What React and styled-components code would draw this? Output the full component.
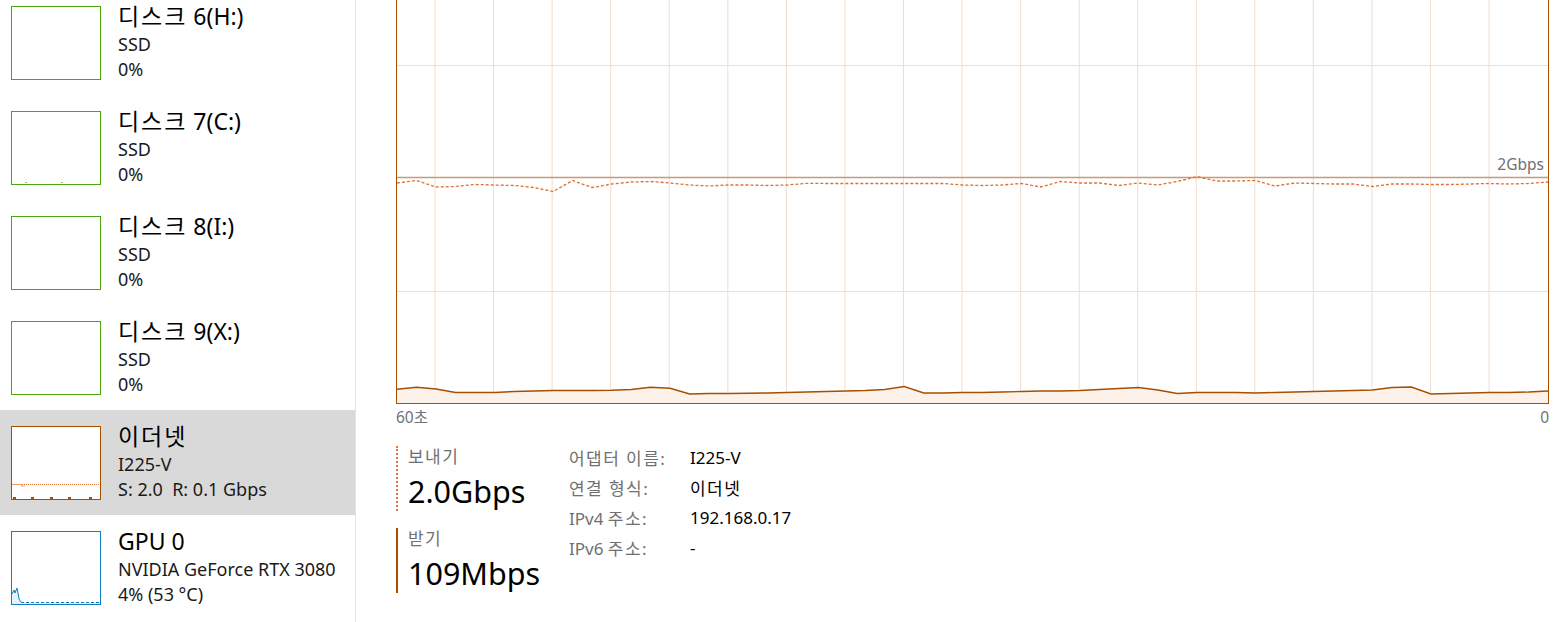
import React from "react";
import styled, { createGlobalStyle } from "styled-components";

const FONT = `"Segoe UI", "Noto Sans", "Noto Sans CJK KR", sans-serif`;
const ETH = "#a74f01";

const Global = createGlobalStyle`
  html, body { margin: 0; padding: 0; background: #fff; overflow: hidden; }
  body { font-family: ${FONT}; color: #000; }
  #root { width: 1560px; height: 622px; overflow: hidden; }
`;

/* Hangul runs are set slightly wider, as the original's Korean face is. */
const Ko = styled.span`
  letter-spacing: 0.085em;
`;

function T({ children }) {
  const parts = String(children).split(/([\uAC00-\uD7A3]+(?:\s[\uAC00-\uD7A3]+)*)/);
  return parts.map((p, i) =>
    /[\uAC00-\uD7A3]/.test(p) ? <Ko key={i}>{p}</Ko> : <React.Fragment key={i}>{p}</React.Fragment>
  );
}

const Page = styled.div`
  display: flex;
  width: 1560px;
  height: 622px;
  overflow: hidden;
`;

const Sidebar = styled.div`
  width: 355px;
  flex: none;
  border-right: 1px solid #e5e5e5;
  display: flex;
  flex-direction: column;
  margin-top: -10px;
`;

const Item = styled.div`
  display: flex;
  height: 105px;
  flex: none;
  padding-left: 11px;
  gap: 17px;
  background: ${(p) => (p.$selected ? "#d9d9d9" : "transparent")};
`;

const Thumb = styled.div`
  width: 90px;
  height: 74px;
  box-sizing: border-box;
  margin-top: 16px;
  border: 1px solid ${(p) => p.$color};
  background: #fff;
  flex: none;
  svg { display: block; }
`;

const ItemText = styled.div`
  padding-top: 10px;
  display: flex;
  flex-direction: column;
`;

const ItemTitle = styled.div`
  font-size: 23px;
  line-height: 32px;
  color: #000;
  white-space: nowrap;
`;

const ItemSub = styled.div`
  font-size: 18px;
  line-height: 25px;
  color: #1a1a1a;
  white-space: nowrap;
`;

const Main = styled.div`
  flex: 1;
  padding-left: 40px;
  padding-right: 11px;
  display: flex;
  flex-direction: column;
`;

const ChartBox = styled.div`
  position: relative;
  margin-top: -48px;
  width: 1153px;
  height: 452px;
  box-sizing: border-box;
  border: 1px solid ${ETH};
  border-left-width: 1.5px;
  svg { display: block; }
`;

const ScaleLabel = styled.span`
  position: absolute;
  right: 4px;
  top: 201px;
  font-size: 15.5px;
  line-height: 20px;
  color: #707070;
`;

const AxisRow = styled.div`
  display: flex;
  justify-content: space-between;
  width: 1153px;
  margin-top: 3px;
  font-size: 15.5px;
  line-height: 20px;
  color: #6f7278;
`;

const Stats = styled.div`
  display: flex;
  margin-top: 15px;
`;

const Blocks = styled.div`
  width: 173px;
  flex: none;
  display: flex;
  flex-direction: column;
  gap: 17px;
  padding-top: 4px;
`;

const Block = styled.div`
  border-left: 2px ${(p) => (p.$dashed ? "dotted #e0763a" : `solid ${ETH}`)};
  padding-left: 10px;
  display: flex;
  flex-direction: column;
`;

const BlockLabel = styled.div`
  font-size: 17px;
  line-height: 22px;
  color: #707070;
`;

const BlockValue = styled.div`
  font-size: 30.5px;
  line-height: 40px;
  margin-top: 3px;
  color: #000;
  white-space: nowrap;
`;

const Props = styled.div`
  display: grid;
  grid-template-columns: 121px auto;
  grid-auto-rows: 30px;
  align-items: center;
  font-size: 17px;
`;

const PropLabel = styled.div`
  color: #707070;
  white-space: nowrap;
`;

const PropValue = styled.div`
  color: #000;
  white-space: nowrap;
`;

const sendY = [183,180.5,187,186.5,184.5,185,185.5,187.5,191.5,180.5,187.5,184,182,181.5,183,185,186,185,185,185.5,185,183.3,183.5,183.5,183.5,183.5,183.5,183.5,183.5,185,185.5,185,183.5,187,181.5,183,183,185.5,183,185,181.5,176.5,181,181,180.5,186,183,183.5,184,184,186.5,184,184,184.5,184.5,184,183.5,184,183.5,182];
const recvY = [389.3,387.3,389,392.5,392.5,392.5,391.5,391,390.5,390.5,390.5,390.3,389.5,387.3,388.3,394,393.5,393.5,393.2,393,392.5,392,391.5,391,390.5,389.5,386.5,393,393,392.5,392.5,392,391.5,391,391,390.5,389.5,388.5,387.5,390,393.5,392.5,392.5,392.5,393,392.5,392,391.5,391,390.5,390,387.5,387,394,393.5,393,392.5,392.5,392,391];

const X0 = 397;
const W = 1151;
const px = (i) => X0 + (i * W) / 59;
const pts = (arr) => arr.map((y, i) => `${px(i).toFixed(1)},${y}`).join(" ");

function MainChart() {
  const vlines = [];
  for (let k = 0; k <= 18; k++) vlines.push(435 + k * 58.56);
  const fill = `${pts(recvY)} ${X0 + W},403 ${X0},403`;
  return (
    <svg width={W} height={450} viewBox={`${X0} -47 ${W} 450`}>
      {vlines.map((x) => (
        <line key={x} x1={x} x2={x} y1={-47} y2={403} stroke="#f0ddcd" strokeWidth="1" />
      ))}
      <line x1={X0} x2={X0 + W} y1={65.5} y2={65.5} stroke="#f0ddcd" strokeWidth="1" />
      <line x1={X0} x2={X0 + W} y1={291.5} y2={291.5} stroke="#f0ddcd" strokeWidth="1" />
      <polygon points={fill} fill="#fcf2e9" />
      <line x1={X0} x2={X0 + W} y1={177.5} y2={177.5} stroke="#c79b78" strokeWidth="1.4" />
      <polyline points={pts(sendY)} fill="none" stroke="#e0702f" strokeWidth="1.3" strokeDasharray="3 2" />
      <polyline points={pts(recvY)} fill="none" stroke={ETH} strokeWidth="1.4" />
    </svg>
  );
}

function DiskThumb({ specks }) {
  return (
    <svg width="88" height="72">
      {specks &&
        [13, 49].map((x) => <rect key={x} x={x} y={70} width="2" height="1" fill="#8cc866" />)}
    </svg>
  );
}

function EthThumb() {
  return (
    <svg width="88" height="72">
      <line x1="0" x2="10" y1="57.5" y2="57.5" stroke="#e8a27a" strokeWidth="1.2" />
      <line x1="9" x2="13" y1="59" y2="59" stroke="#e8a27a" strokeWidth="1" />
      <line x1="10" x2="88" y1="57.5" y2="57.5" stroke="#e2763a" strokeWidth="1" strokeDasharray="1 1" />
      {[1, 19, 38, 56, 77].map((x) => (
        <rect key={x} x={x} y={70} width="3" height="2" fill={ETH} />
      ))}
    </svg>
  );
}

function GpuThumb() {
  return (
    <svg width="88" height="72">
      <polygon points="0,62 2,58 3,61 5,56 6,61 7,67 9,70 88,70 88,72 0,72" fill="#e8f2f9" />
      <polyline points="0,62 2,58 3,61 5,56 6,61 7,67 9,70" fill="none" stroke="#117dbb" strokeWidth="1" />
      <line x1="9" x2="88" y1="70.5" y2="70.5" stroke="#117dbb" strokeWidth="1" strokeDasharray="3 2" />
    </svg>
  );
}

const disks = [
  { title: "디스크 6(H:)" },
  { title: "디스크 7(C:)", specks: true },
  { title: "디스크 8(I:)" },
  { title: "디스크 9(X:)" },
];

const props = [
  ["어댑터 이름:", "I225-V"],
  ["연결 형식:", "이더넷"],
  ["IPv4 주소:", "192.168.0.17"],
  ["IPv6 주소:", "-"],
];

export default function App() {
  return (
    <>
      <Global />
      <Page>
        <Sidebar>
          {disks.map((d) => (
            <Item key={d.title}>
              <Thumb $color="#4da60c">
                <DiskThumb specks={d.specks} />
              </Thumb>
              <ItemText>
                <ItemTitle><T>{d.title}</T></ItemTitle>
                <ItemSub>SSD</ItemSub>
                <ItemSub>0%</ItemSub>
              </ItemText>
            </Item>
          ))}
          <Item $selected>
            <Thumb $color={ETH}>
              <EthThumb />
            </Thumb>
            <ItemText>
              <ItemTitle><T>이더넷</T></ItemTitle>
              <ItemSub>I225-V</ItemSub>
              <ItemSub>S: 2.0&nbsp;&nbsp;R: 0.1 Gbps</ItemSub>
            </ItemText>
          </Item>
          <Item>
            <Thumb $color="#117dbb">
              <GpuThumb />
            </Thumb>
            <ItemText>
              <ItemTitle>GPU 0</ItemTitle>
              <ItemSub>NVIDIA GeForce RTX 3080</ItemSub>
              <ItemSub>4% (53 °C)</ItemSub>
            </ItemText>
          </Item>
        </Sidebar>
        <Main>
          <ChartBox>
            <MainChart />
            <ScaleLabel>2Gbps</ScaleLabel>
          </ChartBox>
          <AxisRow>
            <span><T>60초</T></span>
            <span>0</span>
          </AxisRow>
          <Stats>
            <Blocks>
              <Block $dashed>
                <BlockLabel><T>보내기</T></BlockLabel>
                <BlockValue>2.0Gbps</BlockValue>
              </Block>
              <Block>
                <BlockLabel><T>받기</T></BlockLabel>
                <BlockValue>109Mbps</BlockValue>
              </Block>
            </Blocks>
            <Props>
              {props.map(([k, v]) => (
                <React.Fragment key={k}>
                  <PropLabel><T>{k}</T></PropLabel>
                  <PropValue><T>{v}</T></PropValue>
                </React.Fragment>
              ))}
            </Props>
          </Stats>
        </Main>
      </Page>
    </>
  );
}
